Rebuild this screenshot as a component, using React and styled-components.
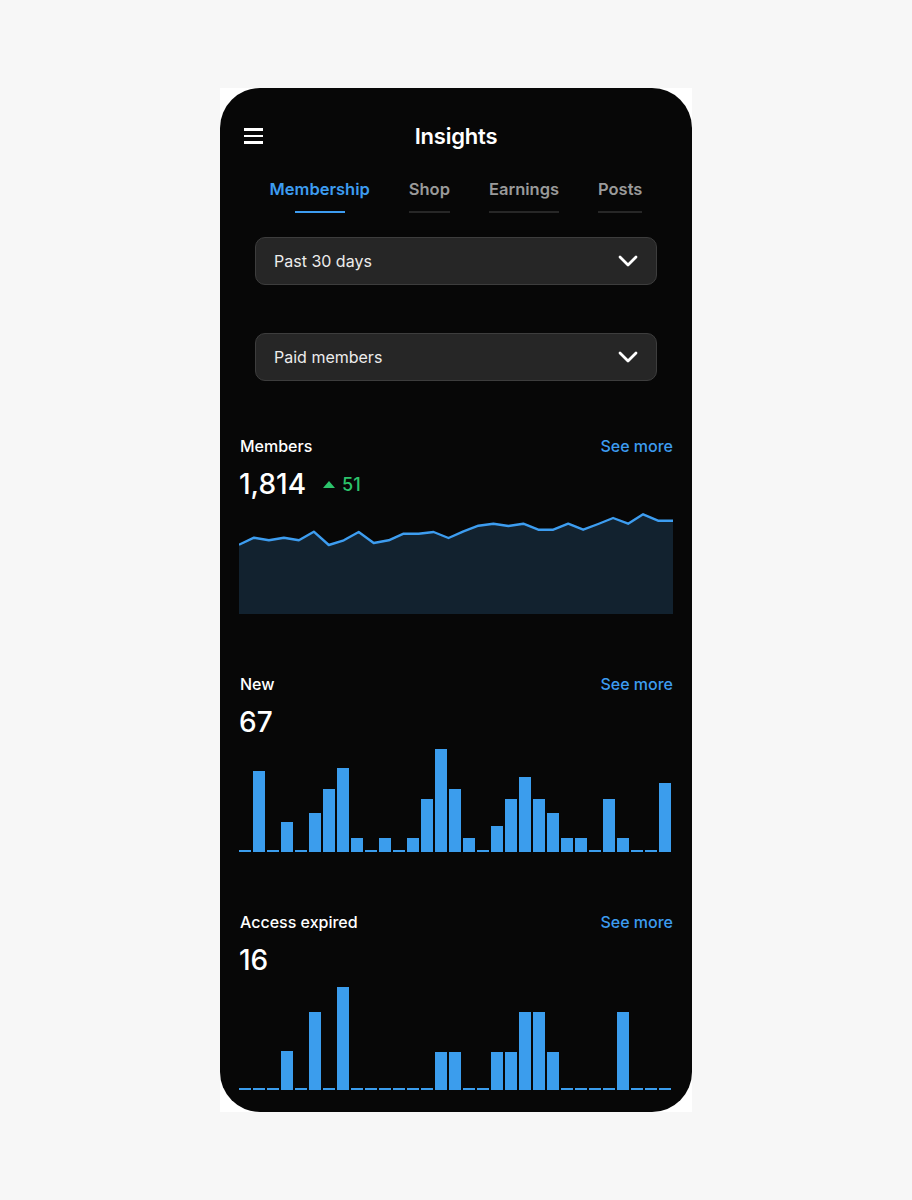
import styled, {createGlobalStyle} from "styled-components";

const GlobalStyle = createGlobalStyle`
  body {
    margin: 0;
    background: #f7f7f7;
    font-family: Inter, "Noto Sans", sans-serif;
  }
`

const Page = styled.div`
  min-height: 1200px;
  display: flex;
  align-items: center;
  justify-content: center;
`

const Frame = styled.div`
  width: 472px;
  height: 1024px;
  background: #fff;
  overflow: hidden;
`

const Phone = styled.div`
  height: 100%;
  background: #070707;
  border-radius: 40px;
  overflow: hidden;
  display: flex;
  flex-direction: column;
  color: #fff;
`

const Header = styled.header`
  display: grid;
  grid-template-columns: 1fr auto 1fr;
  align-items: center;
  height: 40px;
  margin-top: 28px;
`

const Burger = styled.button`
  justify-self: start;
  margin-left: 24px;
  padding: 0;
  border: 0;
  background: none;
  display: flex;
  flex-direction: column;
  gap: 4.2px;

  span {
    display: block;
    width: 19px;
    height: 2.5px;
    background: #fff;
  }
`

const Title = styled.h1`
  margin: 0;
  font-size: 22px;
  font-weight: 600;
  letter-spacing: -0.2px;
`

const Tabs = styled.nav`
  display: flex;
  justify-content: center;
  gap: 39px;
  margin-top: 22px;
`

const Tab = styled.div`
  position: relative;
  font-size: 16.5px;
  line-height: 22px;
  font-weight: 600;
  padding-bottom: 11px;
  color: ${p => p.$active ? "#3d9cf0" : "#9a9a9a"};
  border-bottom: 2px solid ${p => p.$active ? "transparent" : "#272727"};

  &::after {
    content: "";
    display: ${p => p.$active ? "block" : "none"};
    position: absolute;
    left: 50%;
    bottom: -2px;
    width: 50px;
    height: 2px;
    margin-left: -25px;
    background: #3d9cf0;
  }
`

const Selects = styled.div`
  display: flex;
  flex-direction: column;
  align-items: center;
  gap: 48px;
  margin-top: 24px;
`

const Select = styled.div`
  box-sizing: border-box;
  width: 402px;
  height: 48px;
  display: flex;
  align-items: center;
  justify-content: space-between;
  padding: 0 18px 0 18px;
  background: #262626;
  border: 1px solid #3d3d3d;
  border-radius: 10px;
  font-size: 16px;
  color: #ececec;
`

const Sections = styled.div`
  display: flex;
  flex-direction: column;
  gap: 60px;
  padding: 0 19px;
  margin-top: 55px;
`

const Section = styled.section`
  display: flex;
  flex-direction: column;
`

const SectionHead = styled.div`
  display: flex;
  justify-content: space-between;
  align-items: center;
  height: 20px;
  padding-left: 1px;
  font-size: 16px;
  font-weight: 500;
`

const SeeMore = styled.a`
  color: #3d9cf0;
  font-weight: 500;
`

const ValueRow = styled.div`
  display: flex;
  align-items: center;
  gap: 17px;
  height: 36px;
  margin-top: 10px;
  font-size: 28px;
  font-weight: 500;
`

const Delta = styled.span`
  display: flex;
  align-items: center;
  gap: 7px;
  font-size: 18px;
  font-weight: 500;
  color: #2cc36b;

  &::before {
    content: "";
    width: 0;
    height: 0;
    border-left: 6.5px solid transparent;
    border-right: 6.5px solid transparent;
    border-bottom: 7px solid #2cc36b;
  }
`

const Bars = styled.div`
  display: flex;
  align-items: flex-end;
  gap: 2px;
  height: 112px;
`

const Bar = styled.div`
  width: 12px;
  flex: none;
  background: #3b9ded;
`

const Chevron = () => (
  <svg width="20" height="12" viewBox="0 0 20 12" fill="none">
    <path d="M2 2l8 8 8-8" stroke="#fff" strokeWidth="2.8" strokeLinecap="round" strokeLinejoin="round"/>
  </svg>
)

const memberLine = [42.7, 35.7, 38.3, 35.7, 38.3, 29.7, 43, 38.3, 30, 41, 38.3, 31.7, 31.7, 30, 36, 29.3,
  23.7, 21.7, 24, 21.7, 27.7, 27.7, 21.7, 27.7, 22, 16, 21.7, 12.3, 18.7, 18.7]

const newBars = [2, 81, 2, 30, 2, 39, 63, 84, 14, 2, 14, 2, 14, 53, 103, 63, 14, 2, 26, 53, 75, 53, 39, 14, 14, 2,
  53, 14, 2, 2, 69]

const expiredBars = [2, 2, 2, 39, 2, 78, 2, 103, 2, 2, 2, 2, 2, 2, 38, 38, 2, 2, 38, 38, 78, 78, 38, 2, 2, 2, 2, 78,
  2, 2, 2]

function LineChart({values}) {
    const w = 434, h = 112
    const pts = values.map((v, i) => `${(i * w / (values.length - 1)).toFixed(1)},${v}`)
    return (
        <svg width={w} height={h} viewBox={`0 0 ${w} ${h}`} style={{display: "block"}}>
            <path d={`M0,${h} L${pts.join(" L")} L${w},${h} Z`} fill="#12222f"/>
            <path d={`M${pts.join(" L")}`} fill="none" stroke="#3d9df0" strokeWidth="2.4" strokeLinejoin="round"/>
        </svg>
    )
}

function BarChart({values}) {
    return (
        <Bars>
            {values.map((v, i) => <Bar key={i} style={{height: v}}/>)}
        </Bars>
    )
}

export default function App() {
    return (
        <Page>
            <GlobalStyle/>
            <Frame>
                <Phone>
                    <Header>
                        <Burger aria-label="Menu"><span/><span/><span/></Burger>
                        <Title>Insights</Title>
                    </Header>
                    <Tabs>
                        <Tab $active>Membership</Tab>
                        <Tab>Shop</Tab>
                        <Tab>Earnings</Tab>
                        <Tab>Posts</Tab>
                    </Tabs>
                    <Selects>
                        <Select>Past 30 days<Chevron/></Select>
                        <Select>Paid members<Chevron/></Select>
                    </Selects>
                    <Sections>
                        <Section>
                            <SectionHead>Members<SeeMore>See more</SeeMore></SectionHead>
                            <ValueRow>1,814<Delta>51</Delta></ValueRow>
                            <LineChart values={memberLine}/>
                        </Section>
                        <Section>
                            <SectionHead>New<SeeMore>See more</SeeMore></SectionHead>
                            <ValueRow>67</ValueRow>
                            <BarChart values={newBars}/>
                        </Section>
                        <Section>
                            <SectionHead>Access expired<SeeMore>See more</SeeMore></SectionHead>
                            <ValueRow>16</ValueRow>
                            <BarChart values={expiredBars}/>
                        </Section>
                    </Sections>
                </Phone>
            </Frame>
        </Page>
    )
}
